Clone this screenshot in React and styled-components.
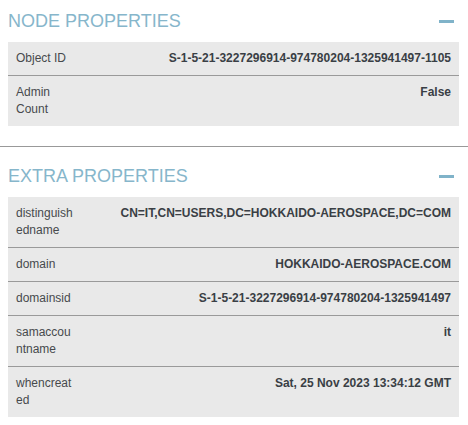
import React from 'react'
import styled, { createGlobalStyle } from 'styled-components'

const GlobalStyle = createGlobalStyle`
  body {
    margin: 0;
    background: #ffffff;
    font-family: "Liberation Sans", Arial, sans-serif;
  }
`

const Page = styled.div`
  width: 468px;
`

const Section = styled.section`
  padding: 8px 9px 0 8px;
  margin-bottom: ${p => p.$gap || 0}px;
`

const Header = styled.div`
  display: flex;
  align-items: center;
  justify-content: space-between;
  height: 26px;
  margin-bottom: 8px;
`

const Title = styled.h2`
  margin: 0;
  font-size: 18px;
  font-weight: normal;
  color: #86b6cb;
`

const Collapse = styled.span`
  display: block;
  width: 15px;
  height: 3px;
  margin-right: 5px;
  background: #80b3c9;
`

const Divider = styled.hr`
  margin: 0 0 8px 0;
  border: none;
  border-top: 1px solid #999999;
`

const Table = styled.table`
  width: 100%;
  border-collapse: collapse;
  background: #e9e9e9;
  font-size: 12px;
  line-height: 17px;
`

const Row = styled.tr`
  border-bottom: 1px solid #9a9a9a;
  &:last-child {
    border-bottom: none;
  }
`

const Label = styled.td`
  width: 60px;
  padding: 8px;
  vertical-align: top;
  color: #474a4d;
  overflow-wrap: anywhere;
`

const Value = styled.td`
  padding: 8px;
  vertical-align: top;
  text-align: right;
  font-weight: bold;
  color: #3a3f45;
`

const nodeProps = [
  ['Object ID', 'S-1-5-21-3227296914-974780204-1325941497-1105'],
  ['Admin Count', 'False'],
]

const extraProps = [
  ['distinguishedname', 'CN=IT,CN=USERS,DC=HOKKAIDO-AEROSPACE,DC=COM'],
  ['domain', 'HOKKAIDO-AEROSPACE.COM'],
  ['domainsid', 'S-1-5-21-3227296914-974780204-1325941497'],
  ['samaccountname', 'it'],
  ['whencreated', 'Sat, 25 Nov 2023 13:34:12 GMT'],
]

const PropTable = ({ rows }) => (
  <Table>
    <tbody>
      {rows.map(([k, v]) => (
        <Row key={k}>
          <Label>{k}</Label>
          <Value>{v}</Value>
        </Row>
      ))}
    </tbody>
  </Table>
)

const App = () => {
  return (
    <Page>
      <GlobalStyle />
      <Section $gap={20}>
        <Header>
          <Title>NODE PROPERTIES</Title>
          <Collapse />
        </Header>
        <PropTable rows={nodeProps} />
      </Section>
      <Divider />
      <Section>
        <Header>
          <Title>EXTRA PROPERTIES</Title>
          <Collapse />
        </Header>
        <PropTable rows={extraProps} />
      </Section>
    </Page>
  )
}

export default App
